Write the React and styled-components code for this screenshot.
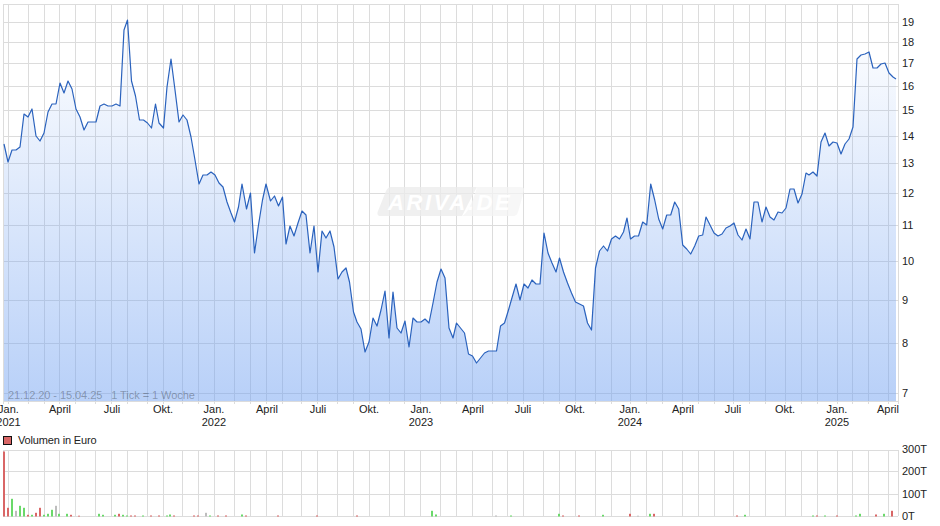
import React from 'react'
import styled, { createGlobalStyle } from 'styled-components'

const GlobalStyle = createGlobalStyle`
html, body {
  margin: 0;
  padding: 0;
  background: #fff;
  overflow: hidden;
}
`

const Page = styled.div`
width: 940px;
height: 526px;
display: flex;
flex-direction: column;
font-family: "Liberation Sans", Arial, sans-serif;
font-size: 11px;
color: #222;
`

const ChartSvg = styled.svg`
display: block;
flex: none;
overflow: visible;
`

const Legend = styled.div`
height: 10px;
flex: none;
display: flex;
align-items: center;
gap: 6px;
padding-left: 3px;
letter-spacing: -0.15px;
`

const LegendSwatch = styled.span`
width: 7px;
height: 7px;
background: #d96666;
border: 1px solid #111;
`

const GridLine = styled.line`
stroke: #dcdcdc;
stroke-width: 1;
shape-rendering: crispEdges;
`

const AxisLabel = styled.text`
font-family: "Liberation Sans", Arial, sans-serif;
font-size: 11px;
fill: #222;
text-anchor: ${props => props.$center ? 'middle' : 'start'};
`

const RangeNote = styled.text`
font-family: "Liberation Sans", Arial, sans-serif;
font-size: 11px;
letter-spacing: -0.06px;
fill: #000;
fill-opacity: 0.3;
white-space: pre;
`

const WatermarkText = styled.text`
font-family: "Liberation Sans", Arial, sans-serif;
font-size: 22px;
font-weight: bold;
font-style: italic;
letter-spacing: 2.6px;
fill: #fff;
`

const VERTICALS = [3, 8, 28, 44, 59, 75, 95, 111, 127, 147, 163, 182, 198, 214, 234, 250, 266, 282, 301, 317, 337, 353, 369, 389, 404, 420, 440, 456, 472, 492, 507, 523, 543, 559, 575, 595, 611, 630, 646, 662, 682, 698, 714, 733, 749, 765, 785, 801, 817, 837, 852, 868, 888, 898]

const PRICE_TICKS = [[19, 22], [18, 42], [17, 63], [16, 86], [15, 110], [14, 136], [13, 163], [12, 193], [11, 225], [10, 261], [9, 300], [8, 343], [7, 393]]

const MONTHS = [
  ['Jan.', 8.5, '2021'], ['April', 60], ['Juli', 112], ['Okt.', 163],
  ['Jan.', 214, '2022'], ['April', 267], ['Juli', 318], ['Okt.', 369],
  ['Jan.', 421, '2023'], ['April', 473], ['Juli', 523], ['Okt.', 575],
  ['Jan.', 630, '2024'], ['April', 683], ['Juli', 733], ['Okt.', 785],
  ['Jan.', 837, '2025'], ['April', 888],
]

const VOLUME_TICKS = [['300T', 449], ['200T', 471], ['100T', 494], ['0T', 516]]

const KURS = [
  [4, 144], [8, 162], [12, 150], [16, 150], [20, 147], [24, 114], [28, 117], [32, 109], [36, 136], [40, 141],
  [44, 133], [48, 112], [52, 104], [56, 104], [60, 83], [64, 93], [68, 81], [72, 89], [76, 109], [80, 117],
  [84, 130], [88, 122], [92, 122], [96, 122], [100, 106], [104, 104], [108, 106], [112, 106], [116, 104], [120, 106],
  [124, 30], [127.5, 20], [131.5, 81], [135.5, 96], [139.5, 120], [143.5, 120], [147.5, 123], [151.5, 128], [155.5, 104], [159, 123],
  [163.5, 128], [167, 87], [171, 59], [175, 90], [179, 122], [183, 115], [187, 120], [191, 137], [195, 160], [199, 184],
  [203, 175], [207, 175], [211, 172], [215, 175], [219, 183], [223, 187], [227, 202], [231, 213], [234.5, 222], [238.5, 207],
  [242, 184], [246.5, 209], [250.5, 193], [254.5, 253], [258.5, 225], [262.5, 200], [266, 184], [270.5, 201], [274.5, 196], [278.5, 206],
  [282.5, 197], [286, 244], [290, 226], [294, 236], [298, 223], [302, 211], [306, 215], [310, 253], [314, 226], [318, 272],
  [322, 231], [326, 238], [330, 231], [334, 247], [338, 279], [342, 272], [346, 268], [349.5, 282], [353.5, 312], [357, 322],
  [361, 329], [365, 352], [369, 342], [373, 318], [377, 326], [381, 310], [385, 291], [389, 338], [393, 292], [397, 328],
  [401, 333], [405, 321], [409, 347], [413, 318], [417, 322], [421, 322], [425, 319], [429, 323], [433, 303], [437, 282],
  [441, 269], [445, 278], [449, 328], [453, 338], [456.5, 323], [460.5, 328], [464.5, 333], [468.5, 354], [472.5, 356], [476.5, 363],
  [480.5, 358], [484.5, 353], [488.5, 351], [492.5, 351], [496.5, 351], [500.5, 326], [504.5, 323], [508.5, 310], [512.5, 296], [516, 284],
  [520, 300], [524, 284], [528, 288], [532, 280], [536, 284], [540, 284], [544, 233], [548, 253], [552, 263], [556, 272],
  [559.5, 258], [563.5, 272], [567.5, 283], [571.5, 293], [575.5, 302], [579.5, 304], [583.5, 306], [587.5, 323], [591.5, 330], [595.5, 268],
  [599.5, 251], [603.5, 246], [607.5, 251], [611.5, 239], [615.5, 236], [619.5, 239], [623.5, 232], [627, 218], [630.5, 239], [634.5, 236],
  [638.5, 236], [642.7, 222], [646.7, 225], [650.7, 184], [654.7, 200], [658.7, 219], [662.7, 229], [666.7, 215], [670.7, 215], [674.7, 202],
  [678.7, 209], [682.7, 245], [686.7, 249], [690.7, 254], [694.7, 246], [698.7, 236], [702.7, 235], [706, 217], [710, 225], [714, 233],
  [718, 236], [722, 234], [726, 228], [730, 226], [734, 223], [738, 235], [742, 240], [746, 229], [750, 239], [754, 202],
  [758, 202], [762, 222], [766, 207], [770, 217], [774, 220], [778, 212], [782, 213], [786, 208], [790, 189], [794, 189],
  [798, 203], [802, 194], [806, 173], [809, 175], [813, 172], [817, 176], [821, 142], [825, 133], [829, 146], [833, 142],
  [837, 143], [841, 154], [845, 144], [849, 139], [853, 127], [857, 59], [861, 55], [865, 54], [869, 52], [873, 68],
  [877, 68], [881, 64], [885, 63], [889, 73], [893, 77], [896, 79],
]

const RED = '#d96666'
const GREEN = '#6ad96a'
const GRAY = '#bdbdbd'

const UMSATZ = [
  [4, 65, RED], [8, 8.7, RED], [12, 17.7, GREEN], [16, 5.7, GRAY], [20, 10.7, GREEN], [24, 8.7, GREEN], [28, 1.7, RED], [32, 1.7, GREEN],
  [36, 3.7, RED], [40, 8.7, RED], [44, 1.7, GREEN], [48, 2.7, GREEN], [52, 6.7, GREEN], [56, 10.7, GRAY], [59, 2.7, GREEN], [67, 2.7, GREEN],
  [71, 1.7, RED], [79, 0.8, RED], [99, 2.7, GREEN], [103, 1.7, GREEN], [115, 1.7, GREEN], [119, 2.7, RED], [123, 1.7, GREEN], [127, 1, GREEN],
  [131, 1, RED], [135, 1, RED], [143, 1, GREEN], [151, 1, RED], [159, 1, RED], [167, 1, GREEN], [170, 2, GREEN], [174, 1, RED],
  [194, 1, RED], [198, 1, RED], [206, 3.7, GRAY], [210, 1, GREEN], [218, 1, RED], [226, 1, RED], [242, 2, GREEN], [246, 1, RED],
  [278, 1, RED], [317, 1, RED], [357, 1, RED], [432, 5.7, GREEN], [436, 2, GREEN], [496, 1, GRAY], [511, 1, GREEN], [559, 2.7, GREEN],
  [563, 1, RED], [579, 1, RED], [603, 1.7, GREEN], [630, 2.7, RED], [638, 0.8, GRAY], [650, 2.7, GREEN], [654, 2.7, RED], [737, 1, RED],
  [745, 1.7, GREEN], [813, 1, GREEN], [817, 1, RED], [825, 1, GREEN], [837, 1, RED], [856, 1, GREEN], [860, 2.7, GREEN], [876, 2, RED],
  [884, 2.7, GREEN], [892, 5.7, RED],
]

const PLOT_BOTTOM = 401
const VOLUME_BASE = 516

const linePoints = KURS.map(p => p.join(',')).join(' ')
const areaPoints = `4,${PLOT_BOTTOM} ${linePoints} 896,${PLOT_BOTTOM}`

const PriceChart = () => (
  <ChartSvg width="940" height="435" viewBox="0 0 940 435">
    <defs>
      <linearGradient id="kursFill" gradientUnits="userSpaceOnUse" x1="0" y1="20" x2="0" y2={PLOT_BOTTOM}>
        <stop offset="0" stopColor="#71a1f1" stopOpacity="0" />
        <stop offset="1" stopColor="#71a1f1" stopOpacity="0.5" />
      </linearGradient>
    </defs>

    {VERTICALS.map(x => <GridLine key={x} x1={x + 0.5} x2={x + 0.5} y1="4" y2={PLOT_BOTTOM + 3} />)}
    {[4, ...PRICE_TICKS.map(t => t[1]), PLOT_BOTTOM].map(y => <GridLine key={y} x1="3" x2="898" y1={y + 0.5} y2={y + 0.5} />)}

    <g opacity="0.75">
      <path d="M391 187 H477 Q470 200 462 216 H381 Q376 216 378 211 L386 191 Q388 187 391 187 Z" fill="#ececec" />
      <path d="M477 187 H520 Q525 187 524 191 L518 212 Q517 216 513 216 H462 Q470 212 477 187 Z" fill="#f4f4f4" />
    </g>
    <WatermarkText x="388" y="210">ARIVA.DE</WatermarkText>

    <polygon points={areaPoints} fill="url(#kursFill)" />
    <polyline points={linePoints} fill="none" stroke="#2a62bd" strokeWidth="1.2" strokeLinejoin="round" />

    <RangeNote x="8" y="399">21.12.20 - 15.04.25   1 Tick = 1 Woche</RangeNote>

    {PRICE_TICKS.map(([label, y]) => <AxisLabel key={label} x="902" y={y + 4}>{label}</AxisLabel>)}
    {MONTHS.map(([label, x, year]) => (
      <React.Fragment key={`${label}${x}`}>
        <AxisLabel $center x={x} y="413">{label}</AxisLabel>
        {year && <AxisLabel $center x={x} y="426">{year}</AxisLabel>}
      </React.Fragment>
    ))}
  </ChartSvg>
)

const VolumeChart = () => (
  <ChartSvg width="940" height="81" viewBox="0 445 940 81">
    {VERTICALS.map(x => <GridLine key={x} x1={x + 0.5} x2={x + 0.5} y1="450" y2={VOLUME_BASE} />)}
    {[450, 471, 494, VOLUME_BASE].map(y => <GridLine key={y} x1="3" x2="898" y1={y + 0.5} y2={y + 0.5} />)}
    {UMSATZ.map(([x, h, color]) => <rect key={x} x={x - 1} y={VOLUME_BASE + 0.5 - h} width="2" height={h} fill={color} />)}
    {VOLUME_TICKS.map(([label, y]) => <AxisLabel key={label} x="902" y={y + 4}>{label}</AxisLabel>)}
  </ChartSvg>
)

const App = () => {
  return (
    <Page>
      <GlobalStyle />
      <PriceChart />
      <Legend>
        <LegendSwatch />
        Volumen in Euro
      </Legend>
      <VolumeChart />
    </Page>
  )
}

export default App
